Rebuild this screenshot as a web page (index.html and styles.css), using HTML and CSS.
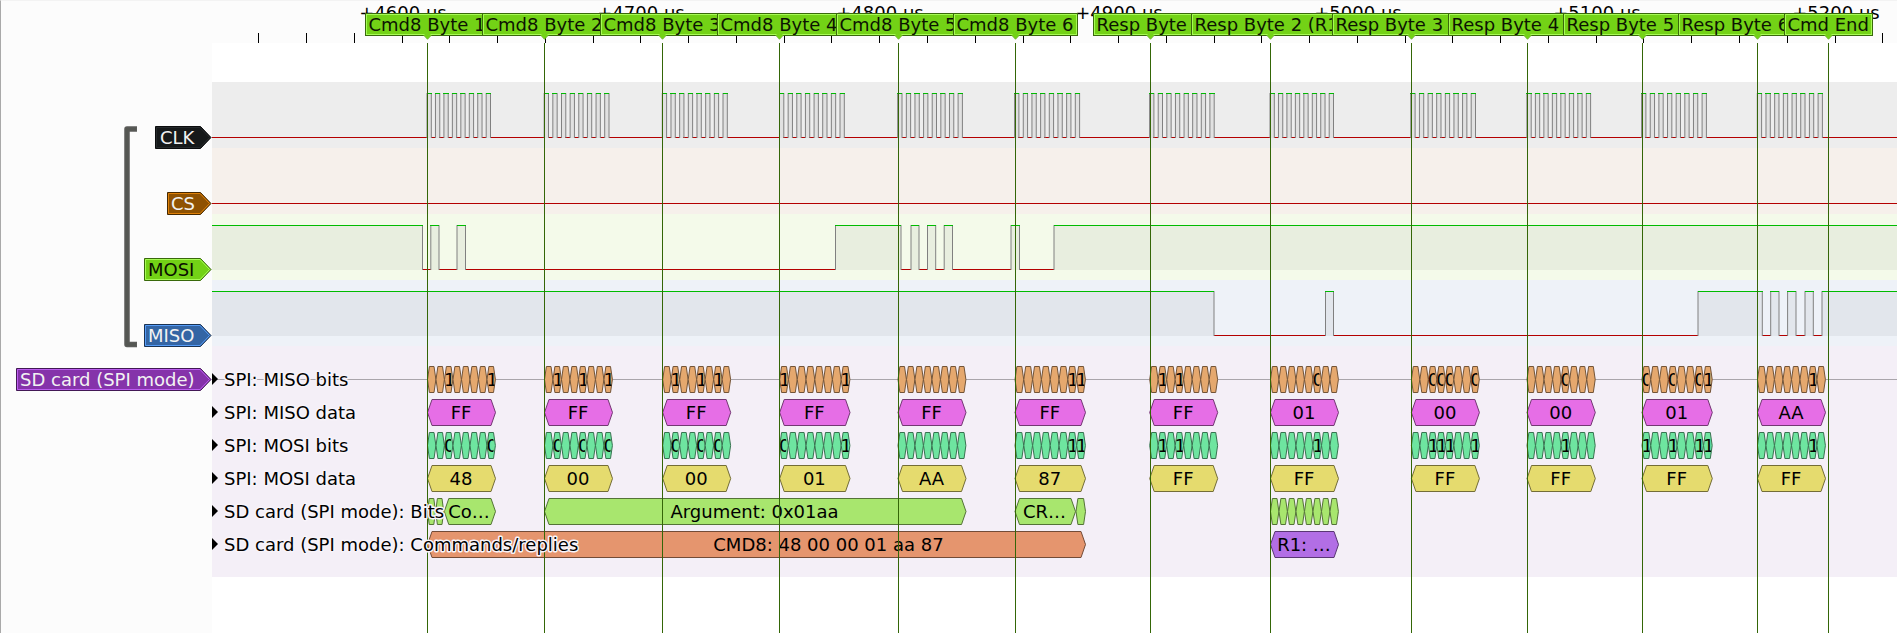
FILE: index.html
```html
<!DOCTYPE html>
<html lang="en">
<head>
<meta charset="utf-8">
<title>Logic trace</title>
<link rel="stylesheet" href="styles.css">
</head>
<body>
<div class="view">
  <aside class="sidebar">
    <div class="group">
      <svg class="bracket" width="14" height="222" viewBox="124 126 14 222">
        <path class="bracket-edge" d="M137 129H127V344.500H137"/>
        <path class="bracket-core" d="M136 129H127V344.500H136"/>
      </svg>
      <div class="channels">
        <svg class="tag clk" width="57" height="24"><path class="outer" d="M.5 .5H45.500L56 11.500L45.500 22.500H.5Z"/><path class="inner" d="M1.500 1.500H45L54.500 11.500L45 21.500H1.500Z"/><text x="5" y="18">CLK</text></svg>
        <svg class="tag cs" width="45" height="24"><path class="outer" d="M.5 .5H33.500L44 11.500L33.500 22.500H.5Z"/><path class="inner" d="M1.500 1.500H33L42.500 11.500L33 21.500H1.500Z"/><text x="4" y="18">CS</text></svg>
        <svg class="tag mosi" width="68" height="24"><path class="outer" d="M.5 .5H56.500L67 11.500L56.500 22.500H.5Z"/><path class="inner" d="M1.500 1.500H56L65.500 11.500L56 21.500H1.500Z"/><text x="4" y="18">MOSI</text></svg>
        <svg class="tag miso" width="68" height="24"><path class="outer" d="M.5 .5H56.500L67 11.500L56.500 22.500H.5Z"/><path class="inner" d="M1.500 1.500H56L65.500 11.500L56 21.500H1.500Z"/><text x="4" y="18">MISO</text></svg>
      </div>
    </div>
    <svg class="tag sd" width="196" height="24"><path class="outer" d="M.5 .5H184.500L195 11.500L184.500 22.500H.5Z"/><path class="inner" d="M1.500 1.500H184L193.500 11.500L184 21.500H1.500Z"/><text x="4" y="18">SD card (SPI mode)</text></svg>
  </aside>
  <svg class="plot" id="plot" width="1685" height="633" viewBox="212 0 1685 633"></svg>
</div>
<script src="plot.js"></script>
</body>
</html>
```
FILE: styles.css
```css
body {
  margin: 0;
  background: #fff;
  overflow: hidden;
}

.view {
  display: flex;
  width: 1897px;
  height: 633px;
}

.sidebar {
  box-sizing: border-box;
  width: 212px;
  flex: none;
  display: flex;
  flex-direction: column;
  align-items: flex-end;
  gap: 20px;
  padding: 125px 0 0;
  background: #fcfcfc;
  border-left: 1px solid #a9a9a9;
  border-top: 1px solid #f3f3f3;
}

.group {
  display: flex;
  align-self: stretch;
  justify-content: space-between;
  padding-left: 123px;
}

.channels {
  display: flex;
  flex-direction: column;
  align-items: flex-end;
  gap: 42px;
}

.plot, .tag, .bracket { display: block; }

text {
  font-family: "DejaVu Sans", sans-serif;
  font-size: 18px;
  white-space: pre;
}

.bracket-edge, .bracket-core { fill: none; stroke-linejoin: round; }
.bracket-edge { stroke: #3f403d; stroke-width: 5.500; opacity: .85; }
.bracket-core { stroke: #555753; stroke-width: 3; }

.tag .outer, .tag .inner { stroke-width: 1; }
.tag text { fill: #f2f2f2; }
.clk .outer { fill: #16191a; stroke: #0b0c0d; }
.clk .inner { fill: #16191a; stroke: #25292b; }
.cs .outer { fill: #8f5202; stroke: #472900; }
.cs .inner { fill: #8f5202; stroke: #de8008; }
.mosi .outer { fill: #73d216; stroke: #39690b; }
.mosi .inner { fill: #73d216; stroke: #a6fb55; }
.miso .outer { fill: #3465a4; stroke: #1a3252; }
.miso .inner { fill: #3465a4; stroke: #559cf8; }
.sd .outer { fill: #8533aa; stroke: #421955; }
.sd .inner { fill: #8533aa; stroke: #bd5df0; }
.tag.mosi text { fill: #0a0f00; }

.ruler { fill: #fcfcfc; }
.ruler-top { fill: #f3f3f3; }
.tick { fill: #000; }
.band-clk { fill: #ededed; }
.band-cs { fill: #f6f0eb; }
.band-mosi { fill: #f4faea; }
.band-miso { fill: #eef2f8; }
.band-sd { fill: #f4eff7; }

.level { fill: #000; fill-opacity: .047; }
.edge { fill: none; stroke: #808080; stroke-width: 1; }
.high { fill: #00bb00; }
.low { fill: #b40000; }
.axis { fill: #a9a5ab; }

.miso-bit { fill: #e5a86e; stroke: #735437; }
.miso-byte { fill: #e66ee6; stroke: #733773; }
.mosi-bit { fill: #6ee5a0; stroke: #377350; }
.mosi-byte { fill: #e5db6e; stroke: #736d37; }
.field { fill: #a8e66e; stroke: #547337; }
.command { fill: #e5956e; stroke: #734b37; }
.reply { fill: #b26ee5; stroke: #593773; }

.marker-line { fill: #346607; }
.middle { text-anchor: middle; }
.row-label {
  fill: #000;
  stroke: #f8f4fa;
  stroke-width: 3px;
  stroke-linejoin: round;
  paint-order: stroke;
}
.flag { fill: #73d216; stroke: #39690b; }
.flag-inner { fill: none; stroke: #a6fb55; }
.flag-tip { fill: #73d216; stroke: #6bad2a; stroke-width: .8; }
.flag-base { fill: #73d216; }
.flag-text { fill: #0c1402; }
```
FILE: plot.js
```js
const plot = document.getElementById("plot");
const NS = "http://www.w3.org/2000/svg";

function add(name, attrs, content) {
  const el = document.createElementNS(NS, name);
  for (const key in attrs) el.setAttribute(key, attrs[key]);
  if (content !== undefined) el.textContent = content;
  plot.appendChild(el);
  return el;
}
function rect(cls, x, y, width, height) {
  add("rect", { class: cls, x, y, width, height });
}

// Background bands
rect("ruler", 212, 0, 1685, 43);
rect("ruler-top", 212, 0, 1685, 1);
rect("band-clk", 212, 82, 1685, 66);
rect("band-cs", 212, 148, 1685, 66);
rect("band-mosi", 212, 214, 1685, 66);
rect("band-miso", 212, 280, 1685, 66);
rect("band-sd", 212, 346, 1685, 231);

// Time ruler
for (let k = -3; k <= 31; k++) {
  const x = Math.floor(402.1 + k * 47.765);
  rect("tick", x, 33, 1, 10);
  if (k >= 0 && k % 5 === 0) {
    add("text", { class: "middle", x: x + 1, y: 19 }, "+" + (4600 + k * 20) + " µs");
  }
}

// A trace is a list of [start, end] spans where the signal is high
function trace(spans, top, bottom) {
  let at = 212;
  for (const [a, b] of spans) {
    rect("level", a, top, b - a, bottom - top + 1);
    if (a > at) rect("low", Math.floor(at), bottom, Math.round(a) - Math.floor(at), 1);
    at = b;
  }
  if (at < 1897) rect("low", Math.floor(at), bottom, 1897 - Math.floor(at), 1);
  for (const [a, b] of spans) {
    if (a > 212) add("path", { class: "edge", d: `M${a} ${top}V${bottom + 1}` });
    if (b < 1897) add("path", { class: "edge", d: `M${b} ${top}V${bottom + 1}` });
    rect("high", Math.round(a - 0.5), top, Math.round(b + 0.3) - Math.round(a - 0.5), 1);
  }
}

const bursts = [[427, 490.5], [544.2, 609], [662.3, 727.3], [779.5, 844.3], [897.7, 962.4], [1014.6, 1079.6],
  [1149.6, 1214.2], [1270, 1333.5], [1410.8, 1475.5], [1526.9, 1590.6], [1641.6, 1706.4], [1757.3, 1822.4]];
const clock = [];
for (const [a, b] of bursts) {
  const period = (b - a - 4.3) / 7;
  for (let i = 0; i < 8; i++) clock.push([a + i * period, a + i * period + 4.3]);
}
trace(clock, 93, 137);
trace([], 159, 203);
trace([[212, 422.5], [430.8, 439], [457, 465.5], [835.5, 901], [911, 919], [927.5, 935.7],
  [944.2, 952.5], [1011, 1019.5], [1054, 1897]], 225, 269);
trace([[212, 1214], [1325.5, 1333.5], [1698, 1762.3], [1770.7, 1779], [1787.6, 1796],
  [1805, 1813.3], [1822, 1897]], 291, 335);

// Decoder rows
rect("axis", 212, 379, 1685, 1);

function hex(cls, x1, x2, y, slant) {
  add("path", { class: cls, d: `M${x1} ${y}L${x1 + slant} ${y - 13}H${x2 - slant}L${x2} ${y}L${x2 - slant} ${y + 13}H${x1 + slant}Z` });
}
function label(x, y, value) {
  add("text", { class: "middle", x, y: y + 6.5 }, value);
}
let clipId = 0;
function bitText(x, y, value) {
  const id = "bit" + clipId++;
  const clip = add("clipPath", { id });
  const box = document.createElementNS(NS, "rect");
  box.setAttribute("x", x + 0.2);
  box.setAttribute("y", y - 12);
  box.setAttribute("width", value === 0 ? 6.3 : 7.2);
  box.setAttribute("height", 24);
  clip.appendChild(box);
  add("text", { x: x - 0.6, y: y + 6.5, "clip-path": `url(#${id})` }, value);
}

// start, end, MISO byte, MOSI byte, then [bit index, MISO bit, MOSI bit]
const bytes = [
  [427.5, 495.5, "FF", "48", [[2, 1, 0], [7, 1, 0]]],
  [544.5, 612.5, "FF", "00", [[1, 1, 0], [4, 1, 0], [7, 1, 0]]],
  [662.7, 730.7, "FF", "00", [[1, 1, 0], [4, 1, 0], [6, 1, 0]]],
  [779.7, 850, "FF", "01", [[0, 1, 0], [7, 1, 1]]],
  [898, 966, "FF", "AA", []],
  [1015, 1085.5, "FF", "87", [[6, 1, 1], [7, 1, 1]]],
  [1149.7, 1217.7, "FF", "FF", [[1, 1, 1], [3, 1, 1]]],
  [1270.5, 1338.5, "01", "FF", [[5, 0, 1]]],
  [1411.4, 1479.4, "00", "FF", [[2, 0, 1], [3, 0, 1], [4, 0, 1], [7, 0, 1]]],
  [1527, 1595.3, "00", "FF", [[4, 0, 1]]],
  [1642, 1712.3, "01", "FF", [[0, 0, 1], [3, 0, 1], [6, 0, 1], [7, 1, 1]]],
  [1757.5, 1825.5, "AA", "FF", [[6, 1, 1]]]
];
function bits(cls, a, b, y) {
  const w = (b - a) / 8;
  for (let i = 0; i < 8; i++) hex(cls, a + i * w, a + (i + 1) * w - 0.1, y, 1.9);
}
for (const [a, b, miso, mosi, shown] of bytes) {
  bits("miso-bit", a, b, 379.5);
  hex("miso-byte", a, b, 412.5, 4.5);
  bits("mosi-bit", a, b, 445.5);
  hex("mosi-byte", a, b, 478.5, 4.5);
  label((a + b) / 2 - 0.5, 412.5, miso);
  label((a + b) / 2 - 0.5, 478.5, mosi);
  for (const [i, hi, lo] of shown) {
    const x = a + i * (b - a) / 8;
    bitText(x, 379.5, hi);
    bitText(x, 445.5, lo);
  }
}

hex("field", 427.5, 435.5, 511.5, 1.7);
hex("field", 435.7, 443.7, 511.5, 1.7);
hex("field", 444.3, 495.5, 511.5, 4.5);
label(469, 511.5, "Co…");
hex("field", 544.5, 966, 511.5, 4.5);
label(754.5, 511.5, "Argument: 0x01aa");
hex("field", 1015, 1075.5, 511.5, 4.5);
label(1044.5, 511.5, "CR…");
hex("field", 1076, 1085.5, 511.5, 1.9);
bits("field", 1270.5, 1338.5, 511.5);
hex("command", 427.5, 1085.5, 544.5, 4.5);
label(828.5, 544.5, "CMD8: 48 00 00 01 aa 87");
hex("reply", 1270.5, 1338.5, 544.5, 4.5);
label(1304, 544.5, "R1: …");

// Marker lines and their flags: position, half width, text
const flags = [
  [427, 62, "Cmd8 Byte 1"], [544, 62, "Cmd8 Byte 2"], [662, 62, "Cmd8 Byte 3"],
  [779, 62, "Cmd8 Byte 4"], [898, 62, "Cmd8 Byte 5"], [1015, 62, "Cmd8 Byte 6"],
  [1150, 57, "Resp Byte 1"], [1270, 79, "Resp Byte 2 (R1)"], [1411, 79, "Resp Byte 3 (R7)"],
  [1527, 79, "Resp Byte 4 (R7)"], [1642, 79, "Resp Byte 5 (R7)"], [1757, 79, "Resp Byte 6 (R7)"],
  [1828, 44, "Cmd End"]
];
for (const [x] of flags) rect("marker-line", x, 43, 1, 590);

["SPI: MISO bits", "SPI: MISO data", "SPI: MOSI bits", "SPI: MOSI data",
  "SD card (SPI mode): Bits", "SD card (SPI mode): Commands/replies"].forEach((name, i) => {
  const y = 379.5 + i * 33;
  add("path", { d: `M212 ${y - 6.5}L218 ${y - 0.5}L212 ${y + 5.5}Z` });
  add("text", { class: "row-label", x: 224, y: y + 6.5 }, name);
});

for (const [x, half, name] of flags) {
  const c = x + 0.5;
  rect("flag", c - half, 13.5, half * 2, 22);
  rect("flag-inner", c - half + 1, 14.5, half * 2 - 2, 20);
  add("path", { class: "flag-tip", d: `M${c - 4} 35L${c} 39.300L${c + 4} 35` });
  rect("flag-base", c - 3, 34, 6, 2);
  add("text", { class: "flag-text", x: c - half + 3, y: 31 }, name);
}
```
